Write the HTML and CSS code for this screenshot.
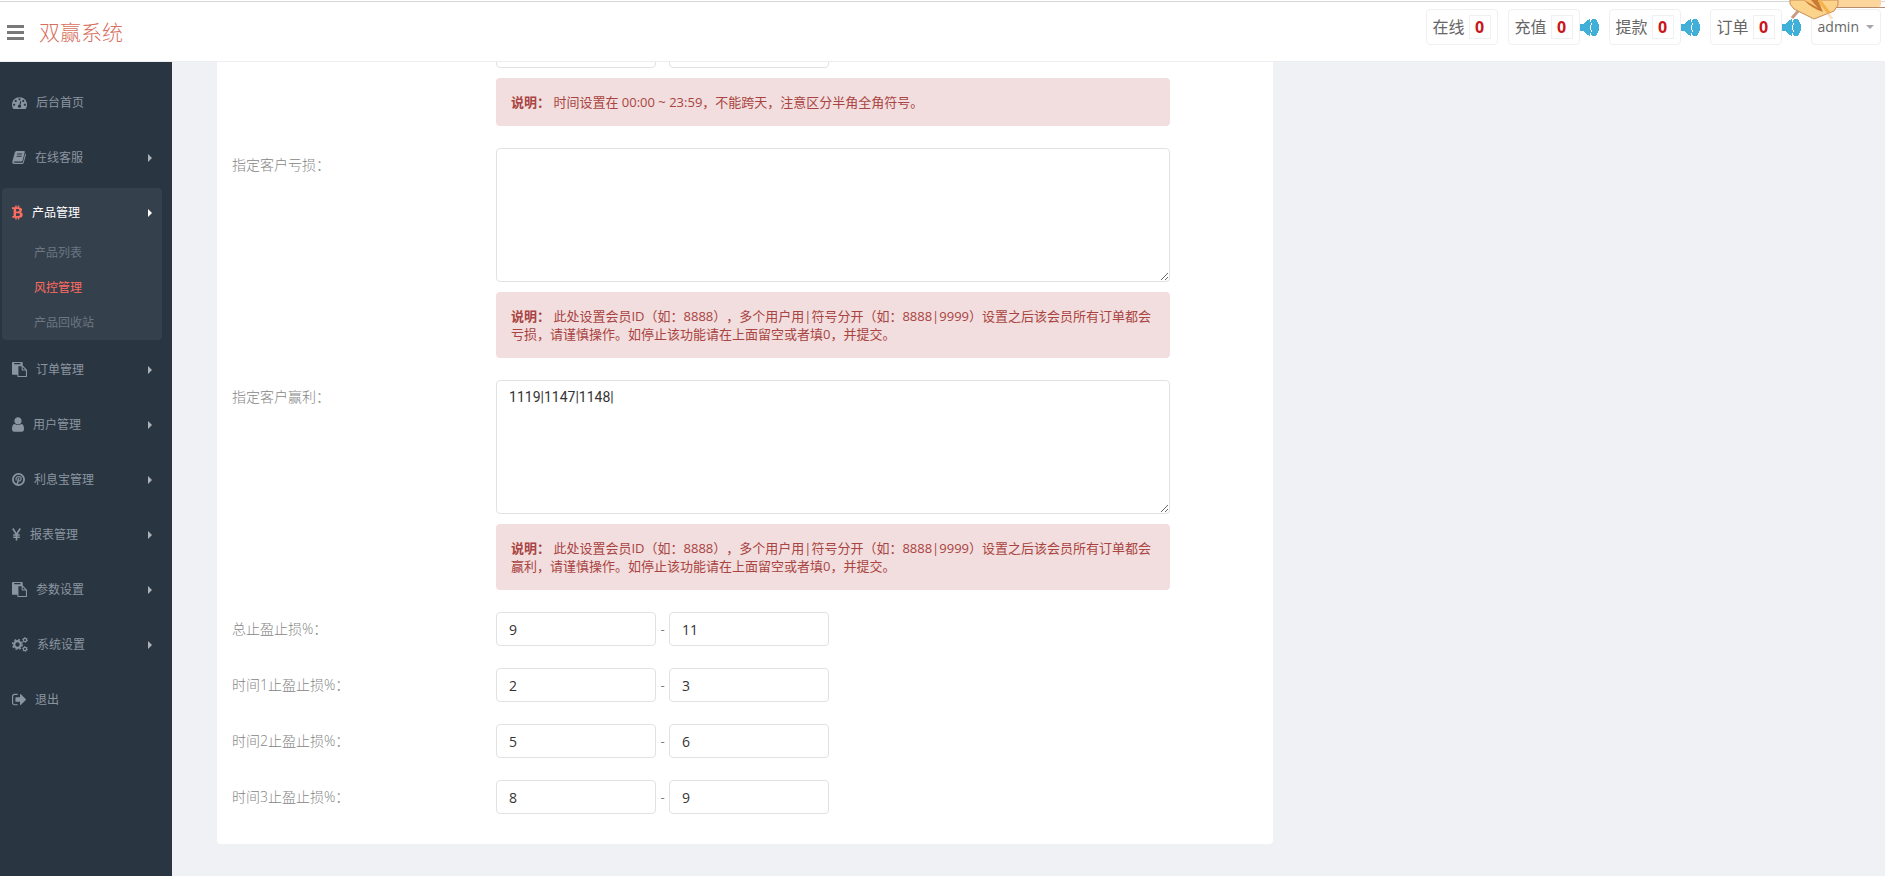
FILE: index.html
```html
<!DOCTYPE html>
<html lang="zh-CN">
<head>
<meta charset="utf-8">
<meta name="viewport" content="width=device-width, initial-scale=1">
<title>双赢系统</title>
<link rel="stylesheet" href="styles.css">
</head>
<body>
<svg class="sprite" aria-hidden="true">
  <symbol id="i-paste" viewBox="0 0 1792 1792"><path fill-rule="evenodd" d="M768 1664h896v-640h-416q-40 0-68-28t-28-68v-416h-384v1152zm256-1440v-64q0-13-9.5-22.5t-22.5-9.5h-704q-13 0-22.5 9.5t-9.5 22.5v64q0 13 9.5 22.5t22.5 9.5h704q13 0 22.5-9.5t9.5-22.5zm256 672h299l-299-299v299zm512 128v672q0 40-28 68t-68 28h-960q-40 0-68-28t-28-68v-160h-544q-40 0-68-28t-28-68v-1344q0-40 28-68t68-28h1088q40 0 68 28t28 68v328q21 13 36 28l408 408q28 28 48 76t20 88z"/></symbol>
  <symbol id="i-sound" viewBox="0 0 19 17"><path d="M0 5h4V4h1V3h1V2h1V1h2V0h1v3h1v3h-1v5h1v3h-1v3H9v-1H7v-1H6v-1H5v-1H4v-1H0zM11 1h1V0h4v1h1v2h1v2h1v7h-1v2h-1v2h-1v1h-4v-1h-1v-3h1v-2h-1V6h1V4h-1z"/></symbol>
</svg>

<header class="topbar">
  <button class="menu-toggle" type="button" aria-label="菜单"><span></span><span></span><span></span></button>
  <a class="logo" href="#">双赢系统</a>
  <div class="status">
    <a class="pill" href="#">在线 <b class="count">0</b></a>
    <div class="alerted"><a class="pill" href="#">充值 <b class="count">0</b></a><svg class="sound"><use href="#i-sound"/></svg></div>
    <div class="alerted"><a class="pill" href="#">提款 <b class="count">0</b></a><svg class="sound"><use href="#i-sound"/></svg></div>
    <div class="alerted"><a class="pill" href="#">订单 <b class="count">0</b></a><svg class="sound"><use href="#i-sound"/></svg></div>
    <button class="pill account" type="button">admin<span class="caret-down"></span></button>
  </div>
  <svg class="badge" viewBox="0 0 98 22" aria-hidden="true">
    <path d="M50 0H94V4Q94 7 91 7H48z" fill="#fbd59b"/><path d="M48 7.500H98" stroke="#b98a6d"/>
    <path d="M13 9L5 18" stroke="#c99c86" stroke-width="3"/><path d="M39 10L45 19" stroke="#fbe3c4" stroke-width="3"/>
    <path d="M3 0H51V5L47 11L27 19L7 9L3 4z" fill="#fbd38a" stroke="#c98d5a"/>
    <path d="M17 0H31L36 12Q24 8 17 0z" fill="#c97a35"/><path d="M17 0H24L31 8z" fill="#f9c374"/><path d="M32 0L42 13" stroke="#f6b04a" stroke-width="3"/>
  </svg>
</header>

<div class="layout">
  <nav class="sidebar">
    <ul class="menu">
      <li><a class="item" href="#"><svg class="ic w15" viewBox="0 128 1792 1536"><path d="M384 1152q0-53-37.5-90.5t-90.5-37.5-90.5 37.5-37.5 90.5 37.5 90.5 90.5 37.5 90.5-37.5 37.5-90.5zm192-448q0-53-37.5-90.5t-90.5-37.5-90.5 37.5-37.5 90.5 37.5 90.5 90.5 37.5 90.5-37.5 37.5-90.5zm428 481l101-382q6-26-7.5-48.5t-38.5-29.5-48 6.5-30 39.5l-101 382q-60 5-107 43.5t-63 98.5q-20 77 20 146t117 89 146-20 89-117q16-60-6-117t-72-91zm660-33q0-53-37.5-90.5t-90.5-37.5-90.5 37.5-37.5 90.5 37.5 90.5 90.5 37.5 90.5-37.5 37.5-90.5zm-640-640q0-53-37.5-90.5t-90.5-37.5-90.5 37.5-37.5 90.5 37.5 90.5 90.5 37.5 90.5-37.5 37.5-90.5zm448 192q0-53-37.5-90.5t-90.5-37.5-90.5 37.5-37.5 90.5 37.5 90.5 90.5 37.5 90.5-37.5 37.5-90.5zm320 448q0 261-141 483-19 29-54 29h-1402q-35 0-54-29-141-221-141-483 0-182 71-348t191-286 286-191 348-71 348 71 286 191 191 286 71 348z"/></svg>后台首页</a></li>
      <li><a class="item more" href="#"><svg class="ic w14" viewBox="0 0 14 14"><path fill-rule="evenodd" d="M4.500.5H12q1 0 .8 1L10.600 10q-.3 1-1.300 1H2.500q-.8 0-.8.600 0 .7.900.7h7.500q.7 0 .9-.7L13.200 3q1 .4.700 1.400L11.800 12q-.4 1.500-1.800 1.500H2Q.2 13.500.2 11.500L2.800 2Q3.200.5 4.500.5zM5.200 3L5 4h5l.2-1zM4.700 5.200l-.2 1h5l.2-1z"/></svg>在线客服</a></li>
      <li class="active">
        <a class="item more" href="#"><svg class="ic w11" viewBox="0 0 11 14"><path fill-rule="evenodd" d="M0 1.800h3.200V0h1.500v1.800h1V0h1.500v1.900q2.900.3 2.900 2.600 0 1.500-1.400 2.100 2 .5 2 2.600 0 2.800-3.500 3.100V14H5.700v-1.700h-1V14H3.200v-1.700H.2L.5 10.600h1.100V3.500H0zM4 3.500v2.600h1.600q1.800 0 1.800-1.300T5.600 3.500zM4 7.700v2.900h2q2 0 2-1.500T6 7.700z"/></svg>产品管理</a>
        <ul class="submenu">
          <li><a href="#">产品列表</a></li>
          <li><a class="current" href="#">风控管理</a></li>
          <li><a href="#">产品回收站</a></li>
        </ul>
      </li>
      <li><a class="item more" href="#"><svg class="ic w15"><use href="#i-paste"/></svg>订单管理</a></li>
      <li><a class="item more" href="#"><svg class="ic w12" viewBox="256 128 1280 1536"><path d="M1536 1399q0 109-62.500 187t-150.500 78h-854q-88 0-150.500-78t-62.500-187q0-85 8.500-160.500t31.500-152 58.500-131 94-89 134.500-34.500q131 128 313 128t313-128q76 0 134.500 34.500t94 89 58.500 131 31.500 152 8.500 160.500zm-256-887q0 159-112.500 271.500t-271.500 112.500-271.500-112.500-112.500-271.500 112.500-271.500 271.500-112.500 271.500 112.500 112.500 271.500z"/></svg>用户管理</a></li>
      <li><a class="item more" href="#"><svg class="ic w13" viewBox="0 0 13 13"><g fill="none" stroke="currentColor"><circle cx="6.500" cy="6.500" r="5.600" stroke-width="1.800"/><path d="M4.300 7.500Q3.200 4.200 6.500 3.600 9.600 3.500 9.100 6 8.400 8.600 6.300 7.800" stroke-width="1.200"/><path d="M6.700 5.200L5.200 11.500" stroke-width="1.500"/></g></svg>利息宝管理</a></li>
      <li><a class="item more" href="#"><svg class="ic w9" viewBox="0 0 9 13"><path d="M.8.500L4.500 6.500 8.200.500M4.500 6v6.500M1.200 7h6.600M1.200 9.200h6.600" fill="none" stroke="currentColor" stroke-width="1.600"/></svg>报表管理</a></li>
      <li><a class="item more" href="#"><svg class="ic w15"><use href="#i-paste"/></svg>参数设置</a></li>
      <li><a class="item more" href="#"><svg class="ic w16" viewBox="0 0 16 15"><g fill="none" stroke="currentColor"><circle cx="5.500" cy="7.500" r="3.300" stroke-width="2.200"/><circle cx="5.500" cy="7.500" r="4.900" stroke-width="1.400" stroke-dasharray="1.900 1.948"/><circle cx="13" cy="3" r="1.700" stroke-width="1.200"/><circle cx="13" cy="3" r="2.500" stroke-width=".8" stroke-dasharray="1.300 1.318"/><circle cx="13" cy="12" r="1.700" stroke-width="1.200"/><circle cx="13" cy="12" r="2.500" stroke-width=".8" stroke-dasharray="1.300 1.318"/></g></svg>系统设置</a></li>
      <li><a class="item" href="#"><svg class="ic w14" viewBox="64 120 1568 1536"><path d="M704 1440q0 4 1 20t.5 26.500-3 23.500-10 19.500-20.500 6.500h-320q-119 0-203.500-84.500t-84.500-203.500v-704q0-119 84.500-203.500t203.500-84.500h320q13 0 22.500 9.500t9.500 22.500q0 4 1 20t.5 26.500-3 23.500-10 19.500-20.500 6.500h-320q-66 0-113 47t-47 113v704q0 66 47 113t113 47h312l11.500 1 11.500 3 8 5.500 7 9 2 13.500zm928-544q0 26-19 45l-544 544q-19 19-45 19t-45-19-19-45v-288h-448q-26 0-45-19t-19-45v-384q0-26 19-45t45-19h448v-288q0-26 19-45t45-19 45 19l544 544q19 19 19 45z"/></svg>退出</a></li>
    </ul>
  </nav>

  <main class="content">
    <form class="panel">
      <div class="row">
        <div></div>
        <div class="field">
          <div class="range"><input class="control" type="text" aria-label="开始时间"><span>-</span><input class="control" type="text" aria-label="结束时间"></div>
          <div class="note"><strong>说明：</strong> 时间设置在 00:00 ~ 23:59，不能跨天，注意区分半角全角符号。</div>
        </div>
      </div>
      <div class="row">
        <label for="lose">指定客户亏损：</label>
        <div class="field">
          <textarea class="control area" id="lose"></textarea>
          <div class="note"><strong>说明：</strong> 此处设置会员ID（如：8888），多个用户用|符号分开（如：8888|9999）设置之后该会员所有订单都会亏损，请谨慎操作。如停止该功能请在上面留空或者填0，并提交。</div>
        </div>
      </div>
      <div class="row">
        <label for="win">指定客户赢利：</label>
        <div class="field">
          <textarea class="control area" id="win">1119|1147|1148|</textarea>
          <div class="note"><strong>说明：</strong> 此处设置会员ID（如：8888），多个用户用|符号分开（如：8888|9999）设置之后该会员所有订单都会赢利，请谨慎操作。如停止该功能请在上面留空或者填0，并提交。</div>
        </div>
      </div>
      <div class="row">
        <label for="t0">总止盈止损%：</label>
        <div class="range"><input class="control" id="t0" type="text" value="9"><span>-</span><input class="control" type="text" value="11" aria-label="总止盈止损上限"></div>
      </div>
      <div class="row">
        <label for="t1">时间1止盈止损%：</label>
        <div class="range"><input class="control" id="t1" type="text" value="2"><span>-</span><input class="control" type="text" value="3" aria-label="时间1止盈止损上限"></div>
      </div>
      <div class="row">
        <label for="t2">时间2止盈止损%：</label>
        <div class="range"><input class="control" id="t2" type="text" value="5"><span>-</span><input class="control" type="text" value="6" aria-label="时间2止盈止损上限"></div>
      </div>
      <div class="row">
        <label for="t3">时间3止盈止损%：</label>
        <div class="range"><input class="control" id="t3" type="text" value="8"><span>-</span><input class="control" type="text" value="9" aria-label="时间3止盈止损上限"></div>
      </div>
    </form>
  </main>
</div>
</body>
</html>
```
FILE: styles.css
```css
* { box-sizing: border-box; }

body {
  margin: 0;
  background: #f0f1f5;
  color: #797979;
  font: 13px/18px "Open Sans", "Noto Sans CJK SC", sans-serif;
}

a { color: inherit; text-decoration: none; }
ul { margin: 0; padding: 0; list-style: none; }
button, input, textarea { font: inherit; color: inherit; }
.sprite { display: none; }

/* Top bar */
.topbar {
  position: fixed;
  top: 0;
  left: 0;
  right: 0;
  z-index: 10;
  display: flex;
  align-items: flex-start;
  height: 62px;
  padding: 0 4px 0 7px;
  background: #fff;
  border-bottom: 1px solid #eceef0;
}
.topbar::before {
  content: "";
  position: absolute;
  top: 1px;
  left: 0;
  right: 0;
  height: 1px;
  background: #d5d7d9;
}
.menu-toggle {
  display: flex;
  flex-direction: column;
  gap: 3px;
  width: 17px;
  margin: 25px 15px 0 0;
  padding: 0;
  border: 0;
  background: none;
}
.menu-toggle span { width: 17px; height: 3px; background: #797979; }
.logo {
  margin-top: 17px;
  color: #d9705f;
  font-size: 21px;
  font-weight: 300;
  line-height: 30px;
}
.status { display: flex; gap: 10px; margin: 9px 0 0 auto; }
.alerted { display: flex; align-items: center; }
.pill {
  display: flex;
  align-items: center;
  gap: 4px;
  height: 36px;
  padding: 0 6px;
  border: 1px solid #f0f0f2;
  border-radius: 4px;
  background: #fff;
  color: #666;
  font-size: 16px;
}
.count {
  width: 22px;
  border: 1px solid #f0f0f2;
  color: #c9151b;
  line-height: 22px;
  text-align: center;
}
.sound { width: 19px; height: 17px; fill: #41b0d8; }
.account { gap: 7px; font-size: 14px; }
.caret-down {
  border: 4px solid transparent;
  border-top-color: #a5a5aa;
  border-bottom: 0;
}
.badge {
  position: absolute;
  top: 0;
  right: 0;
  width: 98px;
  height: 22px;
}

/* Side navigation */
.layout { display: flex; min-height: 100vh; }
.sidebar {
  flex: none;
  width: 172px;
  padding: 78px 10px 0 2px;
  background: #2a3542;
}
.menu { display: flex; flex-direction: column; gap: 5px; }
.item {
  display: flex;
  align-items: center;
  gap: 9px;
  height: 50px;
  padding: 0 10px;
  color: #8b95a0;
  font-size: 12px;
}
.more::after {
  content: "";
  margin-left: auto;
  border: 4px solid transparent;
  border-left-color: #aeb2b7;
  border-right: 0;
}
.ic { flex: none; height: 15px; margin-bottom: 2px; fill: currentColor; }
.w9 { width: 9px; }
.w11 { width: 11px; }
.w12 { width: 12px; }
.w13 { width: 13px; }
.w14 { width: 14px; }
.w15 { width: 15px; }
.w16 { width: 16px; }
.active { border-radius: 4px; background: #35404d; }
.active .item { color: #fff; }
.active .item::after { border-left-color: #fff; }
.active .ic { color: #ff6c60; }
.submenu { margin-top: -3px; }
.submenu a {
  display: block;
  padding-left: 32px;
  color: #6b7681;
  font-size: 12px;
  line-height: 35px;
}
.submenu .current { color: #ff6c60; }

/* Settings form */
.content { flex: 1; min-width: 0; padding: 0 43px 32px 45px; }
.panel {
  display: flex;
  flex-direction: column;
  gap: 22px;
  width: 65%;
  padding: 34px 15px 30px;
  border-radius: 4px;
  background: #fff;
}
.row { display: grid; grid-template-columns: 264fr 674fr 88fr; }
.row label {
  padding-top: 7px;
  color: #858585;
  font-size: 14px;
  font-weight: 300;
  line-height: 20px;
}
.field { display: grid; gap: 10px; min-width: 0; }
.range { display: flex; align-items: center; }
.range span { width: 13px; text-align: center; }
.control {
  width: 160px;
  height: 34px;
  padding: 6px 12px;
  border: 1px solid #e2e2e4;
  border-radius: 4px;
  background: #fff;
  color: #343434;
  font-size: 14px;
  line-height: 20px;
}
.area {
  display: block;
  width: 100%;
  height: 134px;
  font-family: Roboto, "Noto Sans CJK SC", sans-serif;
  resize: both;
}
.note {
  padding: 15px;
  border-radius: 4px;
  background: #f2dede;
  color: #a94442;
  font-size: 13px;
  line-height: 18px;
  text-spacing-trim: space-all;
}
```
